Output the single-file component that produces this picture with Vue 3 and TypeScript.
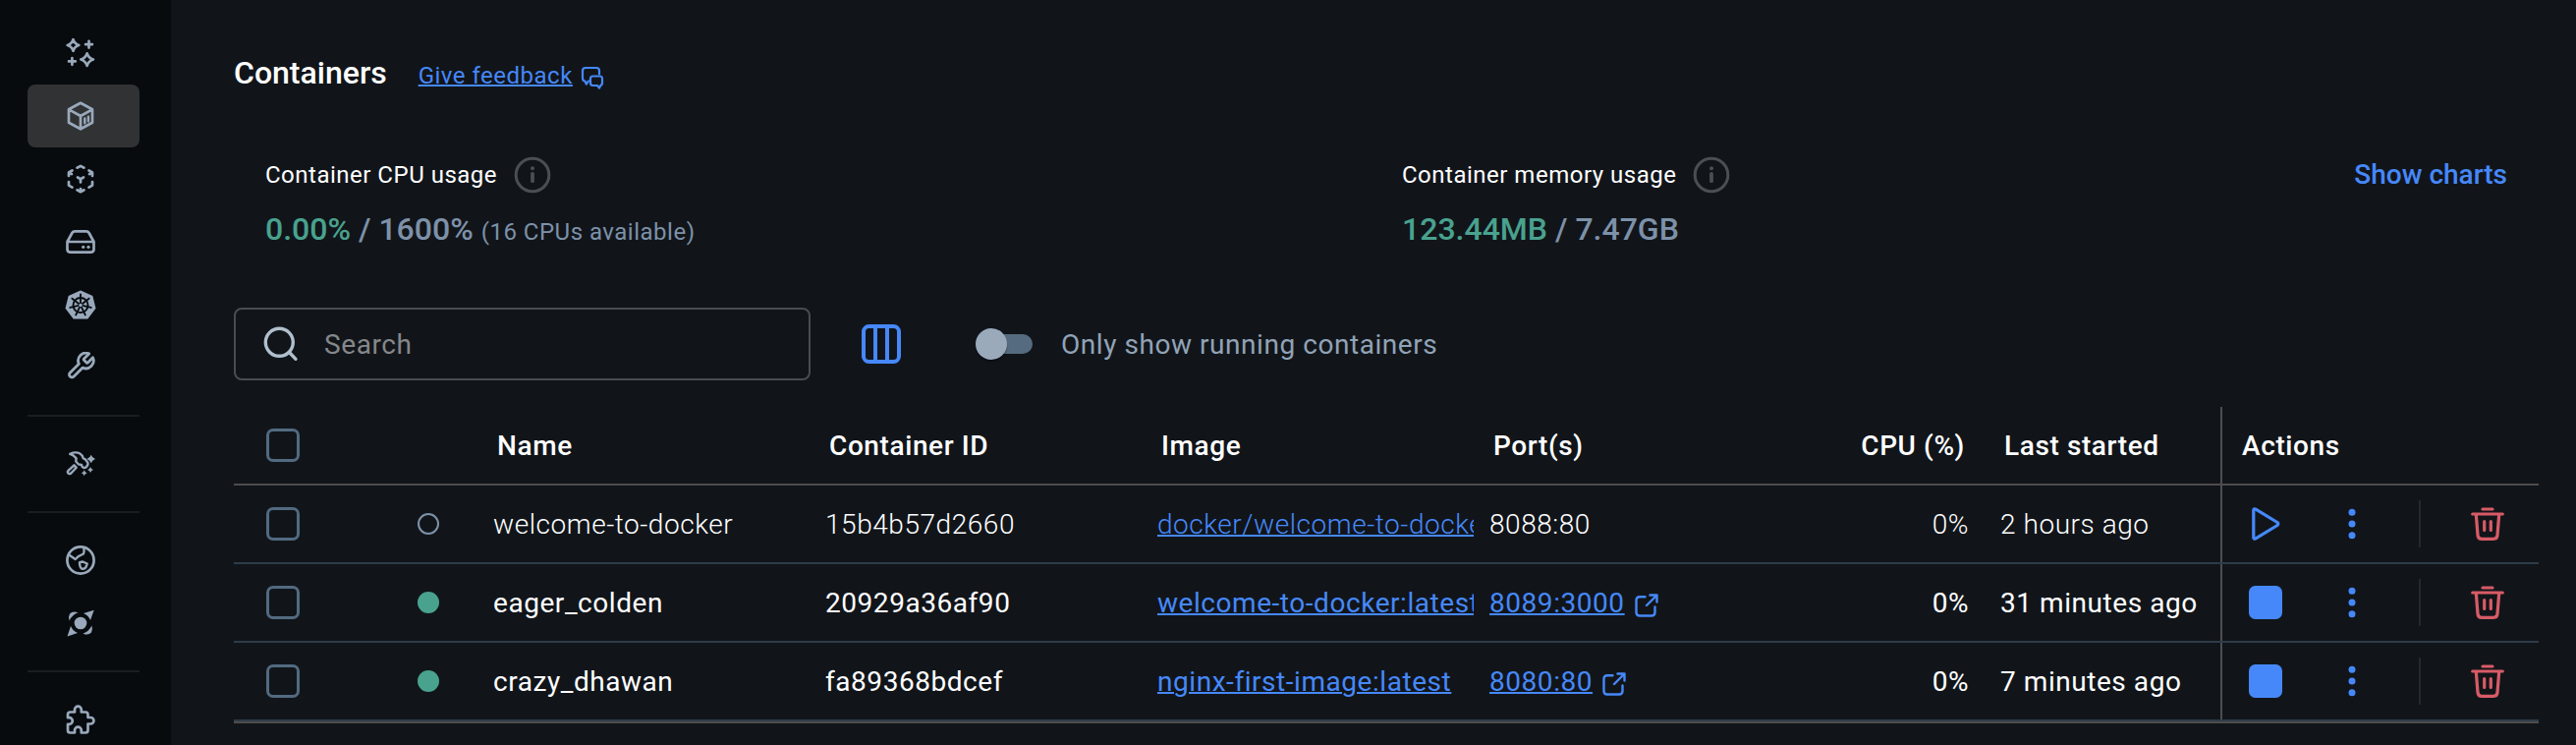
<script setup lang="ts">
interface Container {
  name: string
  id: string
  image: string
  port: string
  started: string
  running: boolean
}

const navGroups: string[][] = [
  ['sparkles', 'container', 'images', 'volume', 'kubernetes', 'wrench'],
  ['hammer'],
  ['globe', 'scout'],
  ['puzzle'],
]

const columns = ['Name', 'Container ID', 'Image', 'Port(s)']

const containers: Container[] = [
  { name: 'welcome-to-docker', id: '15b4b57d2660', image: 'docker/welcome-to-docker', port: '8088:80', started: '2 hours ago', running: false },
  { name: 'eager_colden', id: '20929a36af90', image: 'welcome-to-docker:latest', port: '8089:3000', started: '31 minutes ago', running: true },
  { name: 'crazy_dhawan', id: 'fa89368bdcef', image: 'nginx-first-image:latest', port: '8080:80', started: '7 minutes ago', running: true },
]

const spokes = Array.from({ length: 7 }, (_, i) => `rotate(${(i * 360) / 7} 16 16.5)`)
</script>

<template>
  <div class="app">
    <nav class="sidebar">
      <div v-for="(group, g) in navGroups" :key="g" class="nav-group">
        <a v-for="icon in group" :key="icon" class="nav-item" :class="{ active: icon === 'container' }">
          <svg class="nav-icon" viewBox="0 0 32 32">
            <g v-if="icon === 'sparkles'">
              <path d="M8.5 2.2Q9.8 6.700 14.300 8Q9.800 9.300 8.500 13.800Q7.200 9.300 2.700 8Q7.200 6.700 8.500 2.200Z" />
              <path d="M22.600 16.300Q24.100 21 28.900 22.500Q24.100 24 22.600 28.900Q21.100 24 16.300 22.500Q21.100 21 22.600 16.300Z" />
              <path d="M24.500 3.800v6.800M21.100 7.200h6.800M7.400 21v6.800M4 24.400h6.800" />
            </g>
            <g v-else-if="icon === 'container'">
              <path d="M16 2.800L28 9.300V22.800L16 29.300L4 22.800V9.300ZM4.500 9.600L16 16L27.500 9.600M16 16V29" />
              <path class="thin" d="M20.300 18.500v4.700M23.900 16.700v4.700" />
            </g>
            <g v-else-if="icon === 'images'">
              <path d="M12.500 4.700L16 2.900L19.500 4.700M24.500 7.500L28 9.500V13M28 19V22.600L24.500 24.600M19.500 27.300L16 29.200L12.500 27.300M7.500 24.600L4 22.600V19M4 13V9.500L7.500 7.500M13 14.500L16 16.200L19 14.500M16 16.200V19.500M4 9.500L7 11.200M28 9.500L25 11.200M16 29V26" />
            </g>
            <g v-else-if="icon === 'volume'">
              <path d="M2.500 16L7.400 7Q8.300 5.300 10.200 5.300H21.800Q23.700 5.300 24.600 7L29.500 16V23.400Q29.500 26.700 26.200 26.700H5.800Q2.500 26.700 2.500 23.400ZM3 16H29" />
              <circle class="solid" cx="18.700" cy="21.300" r="1.600" />
              <circle class="solid" cx="24" cy="21.300" r="1.600" />
            </g>
            <g v-else-if="icon === 'kubernetes'">
              <path class="solid" d="M16 1.500L28.300 7L31.500 19.800L23.300 30.500H8.700L.5 19.800L3.700 7Z" />
              <g class="cut">
                <circle cx="16" cy="16.500" r="7.500" />
                <path v-for="s in spokes" :key="s" d="M16 14.500V5.500" :transform="s" />
              </g>
              <circle class="solid" cx="16" cy="16.500" r="1.700" />
            </g>
            <g v-else-if="icon === 'wrench'">
              <path transform="translate(.6 -1.400) scale(1.300)" stroke-width="2.200" d="M14.700 6.300a1 1 0 0 0 0 1.400l1.600 1.600a1 1 0 0 0 1.400 0l3.770-3.770a6 6 0 0 1-7.940 7.940l-6.910 6.910a2.120 2.120 0 0 1-3-3l6.910-6.910a6 6 0 0 1 7.940-7.940z" />
            </g>
            <g v-else-if="icon === 'hammer'">
              <path stroke-width="2.400" d="M5.200 5.800Q11 3.300 15 5.300Q18 7 18.800 10.500L20.600 11.200L23.300 14.600Q24.200 17 21.300 19.700Q19 20.700 17.600 18.800L17 17L13.800 16.300L11.300 13.500L11.600 10.200Q9 7 5.200 5.800Z" />
              <path stroke-width="2.400" d="M9.400 17.300L11.700 19.700L6.300 25.500Q4.700 26.700 3.200 25.400Q2.200 24 3.400 22.800Z" />
              <path class="solid" d="M26.700 6.700Q27.700 9.800 31 11Q27.700 12.200 26.700 15.300Q25.700 12.200 22.400 11Q25.700 9.800 26.700 6.700ZM26 19Q26.700 21.300 29 22Q26.700 22.700 26 25Q25.300 22.700 23 22Q25.300 21.300 26 19ZM19.700 22.300Q20.400 24.600 22.700 25.300Q20.400 26 19.700 28.300Q19 26 16.700 25.300Q19 24.600 19.700 22.300Z" />
            </g>
            <g v-else-if="icon === 'globe'">
              <circle cx="16" cy="16" r="13.600" />
              <path stroke-width="2.400" d="M4.500 10.700L10.700 15L13.500 12.300L18.500 9.800Q20 8.500 19.300 3.300M15 18.200L18.300 17.500L22.700 19.500L21.300 23.300Q20 25.200 17 24.500Q15.200 23.500 15 18.200Z" />
            </g>
            <g v-else-if="icon === 'scout'">
              <g class="solid">
                <circle cx="16" cy="16" r="6.300" />
                <path d="M19 6L29.700 2.700L26 13Q24 8 19 6ZM13 26L2.500 29.400L6 19Q8 24 13 26Z" />
                <path d="M4.600 13.500Q3.300 9.500 5 6.500Q8 3 13.500 5.300Q7.500 7.500 4.600 13.500ZM27.400 18.500Q28.700 22.500 27 25.500Q24 29 18.500 26.700Q24.500 24.500 27.400 18.500Z" />
              </g>
            </g>
            <g v-else>
              <path d="M5.500 8.500H10V6a3.400 3.400 0 0 1 6.800 0V8.500H21q2.500 0 2.500 2.500V14H26.200a3.200 3.200 0 0 1 0 6.500H23.500V27q0 2.500-2.500 2.500H16.800V27a3.400 3.400 0 0 0-6.800 0V29.500H5.500q-2.500 0-2.500-2.500V20.800H4.500a3.300 3.300 0 0 0 0-6.600H3V11q0-2.500 2.500-2.500Z" />
            </g>
          </svg>
        </a>
      </div>
    </nav>

    <main class="main">
      <header class="title-row">
        <h1>Containers</h1>
        <a class="feedback">Give feedback</a>
        <svg class="feedback-icon" viewBox="0 0 24 24">
          <path d="M8 15.500L5.800 18.700L4.700 15.800Q2 15.300 2 12.500V5Q2 2 5 2H16Q19 2 19 5V8.500" />
          <path d="M12.500 10.500H19.500Q22 10.500 22 13V17Q22 19.500 20.500 19.700L19 22.500L17 20H12.500Q10 20 10 17.500V13Q10 10.500 12.500 10.500Z" />
        </svg>
      </header>

      <section class="usage">
        <div class="metric">
          <div class="metric-label">
            <span>Container CPU usage</span>
            <svg class="info" viewBox="0 0 38 38"><circle cx="19" cy="19" r="16.800" /><path d="M19 17.800V25.200" /><circle class="dot" cx="19" cy="12.300" r="2" /></svg>
          </div>
          <div class="metric-value"><b>0.00%</b> / 1600% <small>(16 CPUs available)</small></div>
        </div>
        <div class="metric">
          <div class="metric-label">
            <span>Container memory usage</span>
            <svg class="info" viewBox="0 0 38 38"><circle cx="19" cy="19" r="16.800" /><path d="M19 17.800V25.200" /><circle class="dot" cx="19" cy="12.300" r="2" /></svg>
          </div>
          <div class="metric-value"><b>123.44MB</b> / 7.47GB</div>
        </div>
        <a class="show-charts">Show charts</a>
      </section>

      <section class="toolbar">
        <div class="search">
          <svg viewBox="0 0 36 36"><circle cx="16.300" cy="16.300" r="14" /><path d="M26.500 26.500L33 33.300" /></svg>
          <span>Search</span>
        </div>
        <svg class="columns-icon" viewBox="0 0 40 40">
          <rect x="2" y="2" width="36" height="36" rx="5.500" />
          <path d="M14 2V38M26 2V38" />
        </svg>
        <div class="switch"><i /></div>
        <span class="switch-label">Only show running containers</span>
      </section>

      <section class="table">
        <div class="row head">
          <div class="cell check"><i class="checkbox" /></div>
          <div class="cell" />
          <div v-for="c in columns" :key="c" class="cell">{{ c }}</div>
          <div class="cell cpu">CPU (%)</div>
          <div class="cell started">Last started</div>
          <div class="cell actions">Actions</div>
        </div>
        <div v-for="c in containers" :key="c.id" class="row" :class="{ stopped: !c.running }">
          <div class="cell check"><i class="checkbox" /></div>
          <div class="cell status"><i class="dot" /></div>
          <div class="cell">{{ c.name }}</div>
          <div class="cell">{{ c.id }}</div>
          <div class="cell image"><a>{{ c.image }}</a></div>
          <div class="cell port">
            <template v-if="c.running">
              <a>{{ c.port }}</a>
              <svg class="external" viewBox="0 0 24 24"><path d="M10.500 3.200H5Q1.500 3.200 1.500 6.700V19Q1.500 22.500 5 22.500H17Q20.500 22.500 20.500 19V13.500M12 12L22.500 1.500M15.500 1.500H22.500V8.500" /></svg>
            </template>
            <template v-else>{{ c.port }}</template>
          </div>
          <div class="cell cpu">0%</div>
          <div class="cell started">{{ c.started }}</div>
          <div class="cell actions">
            <svg class="run" viewBox="0 0 34 34">
              <rect v-if="c.running" width="34" height="34" rx="6.500" />
              <path v-else d="M4.800 2.800Q5.200 1.200 7 2.200L29 15.500Q30.500 17 29 18.500L7 31.800Q5.200 32.800 4.800 31.200Z" />
            </svg>
            <svg class="more" viewBox="0 0 8 32"><circle cx="4" cy="4.300" r="3.500" /><circle cx="4" cy="16" r="3.500" /><circle cx="4" cy="27.700" r="3.500" /></svg>
            <i class="separator" />
            <svg class="trash" viewBox="0 0 34 34">
              <path d="M12 2H22M1.700 7H32.300M5.300 7.500L7 28.500Q7.300 32.300 11 32.300H23Q26.700 32.300 27 28.500L28.700 7.500M13.700 14.500V23.500M20.300 14.500V23.500" />
            </svg>
          </div>
        </div>
      </section>
    </main>
  </div>
</template>

<style>
body {
  background: #11151a;
}
</style>

<style scoped>
.app {
  display: flex;
  height: 758px;
  overflow: hidden;
  background: #11151a;
  color: #fff;
  font-family: Roboto, sans-serif;
  font-size: 28px;
}
i {
  display: block;
  flex: none;
}
svg {
  display: block;
  flex: none;
  fill: none;
  stroke-linecap: round;
  stroke-linejoin: round;
}
.sidebar {
  box-sizing: border-box;
  flex: none;
  width: 174px;
  padding: 22px 32px 0 28px;
  background: #070b0e;
}
.nav-group + .nav-group {
  margin-top: 16px;
  padding-top: 16px;
  border-top: 2px solid #1a1d20;
}
.nav-item {
  display: flex;
  align-items: center;
  height: 64px;
  padding-left: 38px;
  border-radius: 8px;
}
.nav-item.active {
  background: #303234;
}
.nav-icon {
  width: 32px;
  height: 32px;
  stroke: #99a9bb;
  stroke-width: 2.7;
}
.nav-icon .thin {
  stroke-width: 2.4;
}
.nav-icon .solid {
  fill: #99a9bb;
  stroke: none;
}
.nav-icon .cut {
  stroke: #070b0e;
  stroke-width: 1.9;
}
.main {
  flex: 1;
  min-width: 0;
  padding: 54px 38px 0 64px;
}
.title-row {
  display: flex;
  align-items: baseline;
  height: 40px;
}
h1 {
  margin: 0;
  font-size: 32px;
  font-weight: 500;
  line-height: 40px;
}
a {
  color: #4688f9;
  text-decoration: underline;
  text-decoration-thickness: 2px;
}
.feedback {
  margin-left: 32px;
  font-size: 24px;
  letter-spacing: 0.5px;
}
.feedback-icon {
  align-self: center;
  width: 24px;
  height: 24px;
  margin: 10px 0 0 8px;
  stroke: #4688f9;
  stroke-width: 2.2;
}
.usage {
  display: flex;
  height: 96px;
  margin-top: 64px;
  padding-left: 32px;
}
.metric {
  flex: none;
  width: 1157px;
}
.metric + .metric {
  flex: 1;
  width: auto;
}
.metric-label {
  display: flex;
  align-items: center;
  height: 40px;
  font-size: 24px;
  letter-spacing: 0.5px;
}
.info {
  width: 38px;
  height: 38px;
  margin-left: 17px;
  stroke: #4b4e52;
  stroke-width: 3;
}
.info path {
  stroke-width: 3.8;
}
.info .dot {
  fill: #4b4e52;
  stroke: none;
}
.metric-value {
  margin-top: 15px;
  color: #7d91a8;
  font-size: 32px;
  font-weight: 500;
  line-height: 40px;
}
.metric-value b {
  color: #49a28e;
  font-weight: 500;
}
.metric-value small {
  font-size: 24px;
  font-weight: 400;
  letter-spacing: 0.5px;
}
.show-charts {
  flex: none;
  padding-right: 32px;
  font-weight: 500;
  line-height: 40px;
  text-decoration: none;
}
.toolbar {
  display: flex;
  align-items: center;
  height: 74px;
  margin-top: 59px;
}
.search {
  box-sizing: border-box;
  display: flex;
  align-items: center;
  width: 587px;
  height: 74px;
  padding-left: 28px;
  border: 2px solid #494c50;
  border-radius: 8px;
  color: #868789;
  letter-spacing: 0.6px;
}
.search svg {
  width: 36px;
  height: 36px;
  margin-right: 26px;
  stroke: #b1bfcd;
  stroke-width: 3.4;
}
.columns-icon {
  width: 40px;
  height: 40px;
  margin-left: 52px;
  stroke: #4688f9;
  stroke-width: 4;
}
.switch {
  width: 58px;
  height: 20px;
  margin-left: 76px;
  border-radius: 10px;
  background: linear-gradient(90deg, transparent 16px, #556b80 16px);
}
.switch i {
  width: 32px;
  height: 32px;
  margin-top: -6px;
  border-radius: 50%;
  background: #9aaabb;
  box-shadow: 0 2px 2px rgba(0, 0, 0, 0.3);
}
.switch-label {
  margin-left: 29px;
  color: #91a3b6;
  letter-spacing: 0.55px;
}
.table {
  margin-top: 27px;
  border-bottom: 2px solid #4e4c4c;
}
.row {
  box-sizing: border-box;
  display: grid;
  grid-template-columns: 100px 154px repeat(4, 338px) 170px 246px 324px;
  height: 80px;
  border-bottom: 2px solid #2e3c49;
  letter-spacing: 0.55px;
}
.row.stopped {
  font-weight: 300;
}
.row.head {
  border-bottom-color: #4e4c4c;
  font-weight: 500;
  letter-spacing: 0.6px;
}
.cell {
  box-sizing: border-box;
  display: flex;
  align-items: center;
  min-width: 0;
  padding-left: 10px;
  white-space: nowrap;
}
.head .cell {
  padding-left: 14px;
}
.cell.check,
.head .cell.check {
  padding-left: 33px;
}
.checkbox {
  box-sizing: border-box;
  width: 34px;
  height: 34px;
  border: 3px solid #526a80;
  border-radius: 7px;
}
.cell.status {
  padding-left: 87px;
}
.status .dot {
  box-sizing: border-box;
  width: 22px;
  height: 22px;
  border-radius: 50%;
  background: #49a28e;
}
.stopped .status .dot {
  border: 2px solid #7d91a8;
  background: none;
}
.image a {
  width: 322px;
  overflow: hidden;
}
.external {
  width: 24px;
  height: 24px;
  margin: 5px 0 0 10px;
  stroke: #4688f9;
  stroke-width: 2.4;
}
.cell.cpu {
  justify-content: flex-end;
  padding-right: 10px;
}
.head .cell.cpu {
  padding-right: 14px;
}
.cell.started {
  padding-left: 22px;
}
.head .cell.started {
  padding-left: 26px;
}
.cell.actions {
  padding-left: 27px;
  border-left: 2px solid #4d4e50;
}
.head .cell.actions {
  padding-left: 20px;
}
.run {
  width: 34px;
  height: 34px;
}
.run rect {
  fill: #4688f9;
}
.run path {
  stroke: #4688f9;
  stroke-width: 3.2;
}
.more {
  width: 8px;
  height: 32px;
  margin-left: 67px;
  fill: #4688f9;
}
.separator {
  width: 2px;
  height: 48px;
  margin: 0 0 0 64px;
  background: #25292d;
}
.trash {
  width: 34px;
  height: 34px;
  margin-left: 51px;
  stroke: #d75b66;
  stroke-width: 3.2;
}
</style>
